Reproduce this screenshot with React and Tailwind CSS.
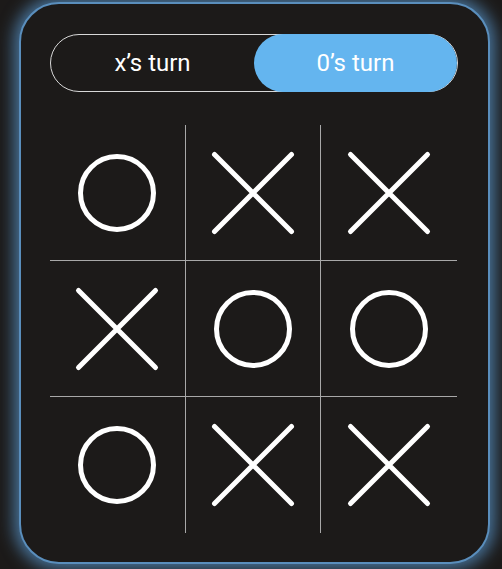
import React from 'react';

const board = ['o', 'x', 'x', 'x', 'o', 'o', 'o', 'x', 'x'];

const cellBorders = [
  'border-r border-b',
  'border-r border-b',
  'border-b',
  'border-r border-b',
  'border-r border-b',
  'border-b',
  'border-r',
  'border-r',
  '',
];

const Mark = ({ type }) => {
  if (type === 'o') {
    return (
      <svg width="90" height="90" viewBox="-45 -45 90 90">
        <circle cx="0" cy="0" r="36.5" fill="none" stroke="white" strokeWidth="5" />
      </svg>
    );
  }
  return (
    <svg width="90" height="90" viewBox="-45 -45 90 90">
      <path d="M-38.5 -38.5 L38.5 38.5 M38.5 -38.5 L-38.5 38.5" stroke="white" strokeWidth="5" strokeLinecap="round" />
    </svg>
  );
};

const App = () => {
  return (
    <div className="w-full h-[569px] bg-[#1c1a19] pt-[2px] pl-[19px] overflow-hidden" style={{ fontFamily: 'Roboto, "Liberation Sans", sans-serif' }}>
      <div className="w-[471px] h-[562px] rounded-[40px] border-2 border-[#5a8ebc] bg-[#1c1a19] shadow-[0_0_16px_5px_rgba(84,140,190,0.8)] pt-[30px] pl-[29px]">
        <div className="w-[408px] h-[58px] rounded-full border border-[#d8d8d8] flex">
          <div className="w-1/2 flex items-center justify-center text-white text-[24px]">x’s turn</div>
          <div className="w-1/2 flex items-center justify-center text-white text-[24px] bg-[#64b5ef] rounded-full -mr-px -my-px">0’s turn</div>
        </div>
        <div className="mt-[33px] w-[407px] grid grid-cols-3">
          {board.map((m, i) => (
            <div key={i} className={`h-[136px] flex items-center justify-center border-[#a8a8a8] ${cellBorders[i]}`}>
              <Mark type={m} />
            </div>
          ))}
        </div>
      </div>
    </div>
  );
};

export default App;
